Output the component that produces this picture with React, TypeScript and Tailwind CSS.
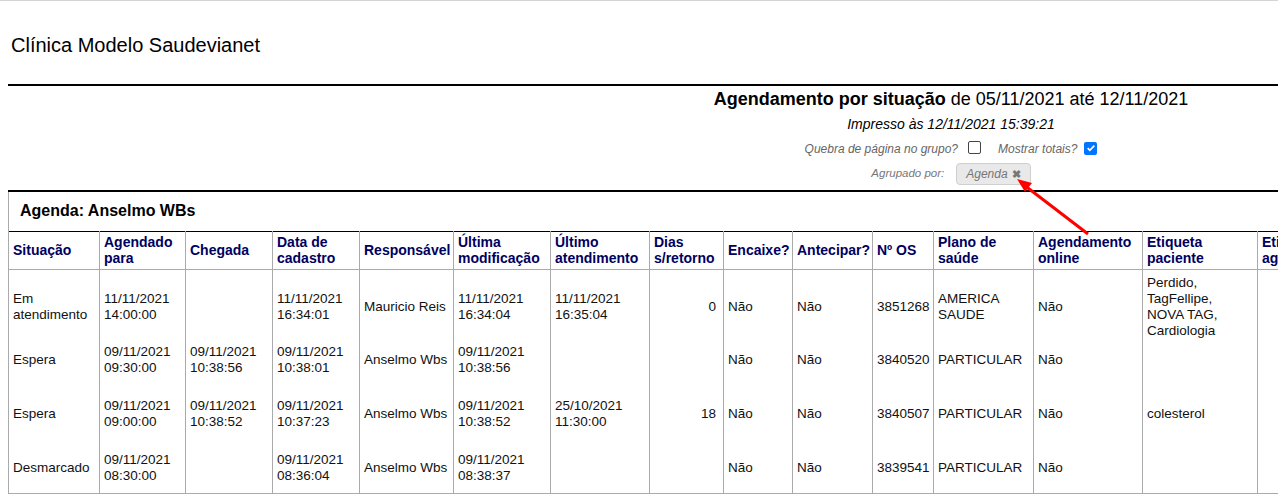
import React from 'react';

const COLS = [
  { label: 'Situação', w: 'w-[91px]' },
  { label: 'Agendado para', w: 'w-[86px]' },
  { label: 'Chegada', w: 'w-[87px]' },
  { label: 'Data de cadastro', w: 'w-[87px]' },
  { label: 'Responsável', w: 'w-[94px]' },
  { label: 'Última modificação', w: 'w-[97px]' },
  { label: 'Último atendimento', w: 'w-[99px]' },
  { label: 'Dias s/retorno', w: 'w-[74px]' },
  { label: 'Encaixe?', w: 'w-[69px]' },
  { label: 'Antecipar?', w: 'w-[80px]' },
  { label: 'Nº OS', w: 'w-[61px]' },
  { label: 'Plano de saúde', w: 'w-[100px]' },
  { label: 'Agendamento online', w: 'w-[109px]' },
  { label: 'Etiqueta paciente', w: 'w-[115px]' },
  { label: 'Etiqueta agenda', w: 'w-[110px]' },
];

type Row = {
  cells: React.ReactNode[];
  pad: string;
};

const ROWS: Row[] = [
  {
    pad: 'pt-[5px] pb-[3px]',
    cells: [
      <>Em<br />atendimento</>,
      <>11/11/2021<br />14:00:00</>,
      '',
      <>11/11/2021<br />16:34:01</>,
      'Mauricio Reis',
      <>11/11/2021<br />16:34:04</>,
      <>11/11/2021<br />16:35:04</>,
      '0',
      'Não',
      'Não',
      '3851268',
      <>AMERICA<br />SAUDE</>,
      'Não',
      <>Perdido,<br />TagFellipe,<br />NOVA TAG,<br />Cardiologia</>,
      '',
    ],
  },
  {
    pad: 'pt-[2px] pb-[20px]',
    cells: [
      'Espera',
      <>09/11/2021<br />09:30:00</>,
      <>09/11/2021<br />10:38:56</>,
      <>09/11/2021<br />10:38:01</>,
      'Anselmo Wbs',
      <>09/11/2021<br />10:38:56</>,
      '',
      '',
      'Não',
      'Não',
      '3840520',
      'PARTICULAR',
      'Não',
      '',
      '',
    ],
  },
  {
    pad: 'pt-[2px] pb-[20px]',
    cells: [
      'Espera',
      <>09/11/2021<br />09:00:00</>,
      <>09/11/2021<br />10:38:52</>,
      <>09/11/2021<br />10:37:23</>,
      'Anselmo Wbs',
      <>09/11/2021<br />10:38:52</>,
      <>25/10/2021<br />11:30:00</>,
      '18',
      'Não',
      'Não',
      '3840507',
      'PARTICULAR',
      'Não',
      'colesterol',
      '',
    ],
  },
  {
    pad: 'pt-[2px] pb-[9px]',
    cells: [
      'Desmarcado',
      <>09/11/2021<br />08:30:00</>,
      '',
      <>09/11/2021<br />08:36:04</>,
      'Anselmo Wbs',
      <>09/11/2021<br />08:38:37</>,
      '',
      '',
      'Não',
      'Não',
      '3839541',
      'PARTICULAR',
      'Não',
      '',
      '',
    ],
  },
];

const Checkbox: React.FC<{ checked?: boolean }> = ({ checked }) =>
  checked ? (
    <span className="inline-flex items-center justify-center w-[13px] h-[13px] rounded-[2px] bg-[#0075ff]">
      <svg viewBox="0 0 12 12" className="w-[10px] h-[10px]">
        <path d="M2 6.2l2.6 2.6L10 3.2" fill="none" stroke="#fff" strokeWidth="2" />
      </svg>
    </span>
  ) : (
    <span className="inline-block w-[13px] h-[13px] rounded-[2px] border border-[#444] bg-white" />
  );

const App: React.FC = () => {
  return (
    <div className="relative w-[1278px] h-[504px] overflow-hidden bg-white border-t border-[#d4d4d4] font-['Liberation_Sans',Arial,sans-serif] text-black">
      <div className="pl-[8px]">
        <h1 className="pt-[33px] pl-[3px] text-[20px] leading-[23px] font-normal">Clínica Modelo Saudevianet</h1>

        <div className="mt-[27px] border-t-2 border-black w-[1400px]" />

        <div className="ml-[616px] w-[654px] flex flex-col items-center text-center">
          <div className="mt-[3px] text-[18px] leading-[21px]">
            <span className="font-bold">Agendamento por situação</span> de 05/11/2021 até 12/11/2021
          </div>
          <div className="mt-[6px] text-[14px] leading-[16px] italic">Impresso às 12/11/2021 15:39:21</div>
          <div className="mt-[9px] flex items-center text-[12px] leading-[14px] italic text-[#666]">
            <span>Quebra de página no grupo?</span>
            <span className="ml-[10px]"><Checkbox /></span>
            <span className="ml-[17px]">Mostrar totais?</span>
            <span className="ml-[7px]"><Checkbox checked /></span>
          </div>
          <div className="mt-[6px] flex items-center text-[12px] italic text-[#777]">
            <span className="text-[11.5px]">Agrupado por:</span>
            <span className="ml-[12px] h-[22px] px-[9px] flex items-center gap-[4px] rounded-[4px] border border-[#cfcfcf] bg-[#e9e9e9] text-[12px]">
              Agenda
              <span className="not-italic font-bold text-[11px] text-[#777]">✖</span>
            </span>
          </div>
        </div>

        <div className="mt-[5px] border-t-2 border-black w-[1400px]" />

        <table className="table-fixed border-collapse w-[1359px] text-[13.5px] leading-[16px]">
          <colgroup>
            {COLS.map((c) => (
              <col key={c.label} className={c.w} />
            ))}
          </colgroup>
          <tbody>
            <tr>
              <td colSpan={COLS.length} className="h-[39px] border-l border-[#aaa] pl-[11px] text-[16px] font-bold align-middle">
                Agenda: Anselmo WBs
              </td>
            </tr>
            <tr className="border-t border-black">
              {COLS.map((c) => {
                const cut = c.label.lastIndexOf(' ');
                const split = cut > 0 && c.label !== 'Nº OS';
                return (
                  <th
                    key={c.label}
                    className="h-[38px] border-x border-b border-[#aaa] px-[4px] text-left align-middle whitespace-nowrap font-bold text-[14px] text-[#000060] leading-[16px]"
                  >
                    {split ? (
                      <>
                        {c.label.slice(0, cut)}
                        <br />
                        {c.label.slice(cut + 1)}
                      </>
                    ) : (
                      c.label
                    )}
                  </th>
                );
              })}
            </tr>
            {ROWS.map((r, i) => (
              <tr key={i} className={i === ROWS.length - 1 ? 'border-b border-[#aaa]' : ''}>
                {r.cells.map((cell, j) => (
                  <td
                    key={j}
                    className={`border-x border-[#aaa] align-middle whitespace-nowrap text-[#111] ${r.pad} ${
                      j === 7 ? 'text-right pr-[7px] pl-[4px]' : 'px-[4px]'
                    }`}
                  >
                    {cell}
                  </td>
                ))}
              </tr>
            ))}
          </tbody>
        </table>
      </div>

      <svg className="absolute left-0 top-0 pointer-events-none" width="1278" height="504">
        <line x1="1088" y1="233" x2="1024" y2="184" stroke="#ff0000" strokeWidth="3" />
        <path d="M1017 178 L1032 182 L1025 191 Z" fill="#ff0000" />
      </svg>
    </div>
  );
};

export default App;
